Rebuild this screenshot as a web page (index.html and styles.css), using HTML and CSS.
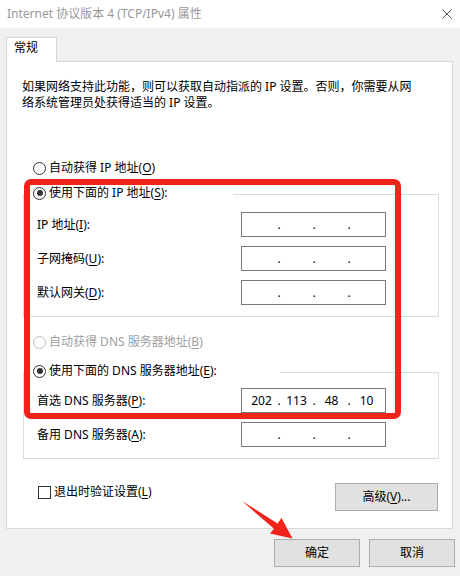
FILE: index.html
```html
<!DOCTYPE html>
<html lang="zh-CN">
  <head>
    <meta charset="utf-8"/>
    <title>Internet 协议版本 4 (TCP/IPv4) 属性</title>
    <link rel="stylesheet" href="styles.css">
  </head>
  <body>
    <div class="titlebar">
      <span class="titlebar__text">Internet 协议版本 4 (TCP/IPv4) 属性</span>
      <svg class="titlebar__close" width="10" height="10" viewBox="0 0 10 10">
        <path d="M0.5 0.5 L9.5 9.5 M9.5 0.5 L0.5 9.5" stroke="#555" stroke-width="1" fill="none"/>
      </svg>
    </div>

    <div class="dialog">
      <div class="tab">常规</div>
      <div class="panel">
        <p class="desc">如果网络支持此功能，则可以获取自动指派的 IP 设置。否则，你需要从网络系统管理员处获得适当的 IP 设置。</p>

        <div class="option option--standalone option--first">
          <span class="radio"></span>自动获得 IP 地址(<u>O</u>)
        </div>

        <div class="group">
          <div class="option group__head group__head--ip">
            <span class="radio radio--checked"></span>使用下面的 IP 地址(<u>S</u>):
          </div>
          <div class="fields">
            <span>IP 地址(<u>I</u>):</span>
            <div class="ip"><span class="ip__seg"></span><span class="ip__dot">.</span><span class="ip__seg"></span><span class="ip__dot">.</span><span class="ip__seg"></span><span class="ip__dot">.</span><span class="ip__seg"></span></div>
            <span>子网掩码(<u>U</u>):</span>
            <div class="ip"><span class="ip__seg"></span><span class="ip__dot">.</span><span class="ip__seg"></span><span class="ip__dot">.</span><span class="ip__seg"></span><span class="ip__dot">.</span><span class="ip__seg"></span></div>
            <span>默认网关(<u>D</u>):</span>
            <div class="ip"><span class="ip__seg"></span><span class="ip__dot">.</span><span class="ip__seg"></span><span class="ip__dot">.</span><span class="ip__seg"></span><span class="ip__dot">.</span><span class="ip__seg"></span></div>
          </div>
        </div>

        <div class="option option--standalone option--disabled option--dns-auto">
          <span class="radio"></span>自动获得 DNS 服务器地址(<u>B</u>)
        </div>

        <div class="group group--dns">
          <div class="option group__head group__head--dns">
            <span class="radio radio--checked"></span>使用下面的 DNS 服务器地址(<u>E</u>):
          </div>
          <div class="fields fields--dns">
            <span>首选 DNS 服务器(<u>P</u>):</span>
            <div class="ip"><span class="ip__seg">202</span><span class="ip__dot">.</span><span class="ip__seg">113</span><span class="ip__dot">.</span><span class="ip__seg">48</span><span class="ip__dot">.</span><span class="ip__seg">10</span></div>
            <span>备用 DNS 服务器(<u>A</u>):</span>
            <div class="ip"><span class="ip__seg"></span><span class="ip__dot">.</span><span class="ip__seg"></span><span class="ip__dot">.</span><span class="ip__seg"></span><span class="ip__dot">.</span><span class="ip__seg"></span></div>
          </div>
        </div>

        <div class="panel__footer">
          <div class="check"><span class="check__box"></span>退出时验证设置(<u>L</u>)</div>
          <button type="button" class="btn btn--advanced">高级(<u>V</u>)...</button>
        </div>
      </div>

      <div class="actions">
        <button type="button" class="btn">确定</button>
        <button type="button" class="btn">取消</button>
      </div>
    </div>

    <!-- annotation overlays -->
    <div class="highlight"></div>
    <svg class="arrow" width="460" height="576" viewBox="0 0 460 576">
      <polygon points="242,501 277.5,523.5 281.5,518 292.5,538.5 270,533.5 274,528.8" fill="#f2231b"/>
    </svg>
  </body>
</html>
```

FILE: styles.css
```css
body {
  position: relative;
  width: 460px;
  height: 576px;
  margin: 0;
  overflow: hidden;
  background: #F0F0F0;
  color: #000;
  font-family: "Noto Sans", "Noto Sans CJK SC", sans-serif;
  font-size: 12px;
  line-height: 16px;
}

u {
  text-decoration: underline;
  text-underline-offset: 2px;
}

.titlebar {
  display: flex;
  align-items: center;
  justify-content: space-between;
  height: 28px;
  padding: 0 8px 0 7px;
  background: #FFF;
  color: #999;
}

.titlebar__close {
  display: block;
}

.dialog {
  padding: 9px 0 0 6px;
}

.tab {
  position: relative;
  z-index: 1;
  box-sizing: border-box;
  width: 51px;
  height: 25px;
  margin-bottom: -1px;
  padding-left: 7px;
  border: 1px solid #D9D9D9;
  border-bottom: 0;
  background: #FFF;
  line-height: 19px;
}

.panel {
  box-sizing: border-box;
  width: 447px;
  padding: 17px 12px 17px 15px;
  border: 1px solid #D9D9D9;
  background: #FFF;
}

.desc {
  width: 398px;
  margin: 0;
}

.option {
  display: flex;
  align-items: center;
  height: 16px;
  white-space: nowrap;
}

.option--standalone {
  margin-left: 11px;
}

.option--first {
  margin-top: 49px;
}

.option--dns-auto {
  margin-top: 17px;
}

.option--disabled {
  color: #A0A0A0;
}

.radio {
  display: flex;
  align-items: center;
  justify-content: center;
  box-sizing: border-box;
  width: 13px;
  height: 13px;
  margin-right: 3px;
  border: 1px solid #333;
  border-radius: 50%;
  background: #FFF;
}

.option--disabled .radio {
  border-color: #BCBCBC;
}

.radio--checked::after {
  content: "";
  width: 6px;
  height: 6px;
  border-radius: 50%;
  background: #333;
}

.group {
  box-sizing: border-box;
  width: 416px;
  margin: 18px 0 0 1px;
  padding: 0 0 11px 13px;
  border: 1px solid #DCDCDC;
}

.group--dns {
  margin-top: 22px;
}

.group__head {
  margin: -10px 0 0 -6px;
  padding-left: 2px;
  background: #FFF;
}

.group__head--ip {
  width: 200px;
}

.group__head--dns {
  width: 247px;
}

.fields {
  display: grid;
  grid-template-columns: 204px 145px;
  row-gap: 9px;
  align-items: center;
  margin-top: 11px;
}

.fields--dns {
  margin-top: 9px;
}

.ip {
  display: flex;
  box-sizing: border-box;
  height: 25px;
  padding-left: 4px;
  border: 1px solid #7A7A7A;
  line-height: 23px;
}

.ip__seg {
  width: 31px;
  text-align: center;
}

.ip__dot {
  width: 4px;
  text-align: center;
}

.panel__footer {
  display: flex;
  align-items: flex-start;
  justify-content: space-between;
  box-sizing: border-box;
  width: 416px;
  margin-top: 24px;
  padding-left: 16px;
}

.check {
  display: flex;
  align-items: center;
  margin-top: 1px;
}

.check__box {
  box-sizing: border-box;
  width: 13px;
  height: 13px;
  margin-right: 3px;
  border: 1px solid #333;
  background: #FFF;
}

.btn {
  box-sizing: border-box;
  width: 86px;
  height: 28px;
  padding: 0;
  border: 1px solid #ADADAD;
  background: #E1E1E1;
  color: #000;
  font: inherit;
}

.btn--advanced {
  width: 103px;
}

.actions {
  display: flex;
  justify-content: flex-end;
  gap: 9px;
  padding: 10px 5px 0 0;
}

.highlight {
  position: absolute;
  left: 24px;
  top: 179px;
  box-sizing: border-box;
  width: 377px;
  height: 240px;
  border: 6px solid #F2231B;
  border-radius: 7px;
  pointer-events: none;
}

.arrow {
  position: absolute;
  left: 0;
  top: 0;
  pointer-events: none;
}
```
